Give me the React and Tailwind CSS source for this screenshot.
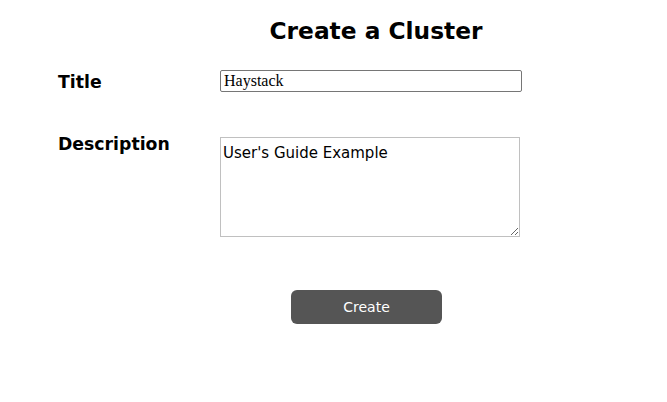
export default function App() {
  return (
    <div className="w-[667px] h-[402px] bg-white text-black" style={{ fontFamily: '"DejaVu Sans", Verdana, sans-serif' }}>
      <div className="pt-[15px] pl-[220px]">
        <h1 className="w-[312px] text-center text-[23.3px] font-bold leading-[32px]">Create a Cluster</h1>
      </div>

      <div className="mt-[23px] flex items-start pl-[58px]">
        <label className="w-[162px] pt-[1px] text-[17.3px] font-bold leading-[22px]">Title</label>
        <input
          type="text"
          defaultValue="Haystack"
          className="h-[22px] w-[302px] rounded-[2px] border border-[#767676] px-[3px] text-[16px] leading-[20px] outline-none"
          style={{ fontFamily: '"Liberation Serif", "Times New Roman", serif' }}
        />
      </div>

      <div className="mt-[44px] flex items-start pl-[58px]">
        <label className="w-[162px] -mt-[4px] text-[17.3px] font-bold leading-[22px]">Description</label>
        <textarea
          defaultValue="User's Guide Example"
          className="h-[100px] w-[300px] border border-[#c0c0c0] px-[2px] pt-[5px] text-[15px] leading-[20px] outline-none"
        />
      </div>

      <div className="mt-[53px] pl-[291px]">
        <button className="h-[34px] w-[151px] rounded-[6px] bg-[#555555] text-[14px] text-white">Create</button>
      </div>
    </div>
  );
}
